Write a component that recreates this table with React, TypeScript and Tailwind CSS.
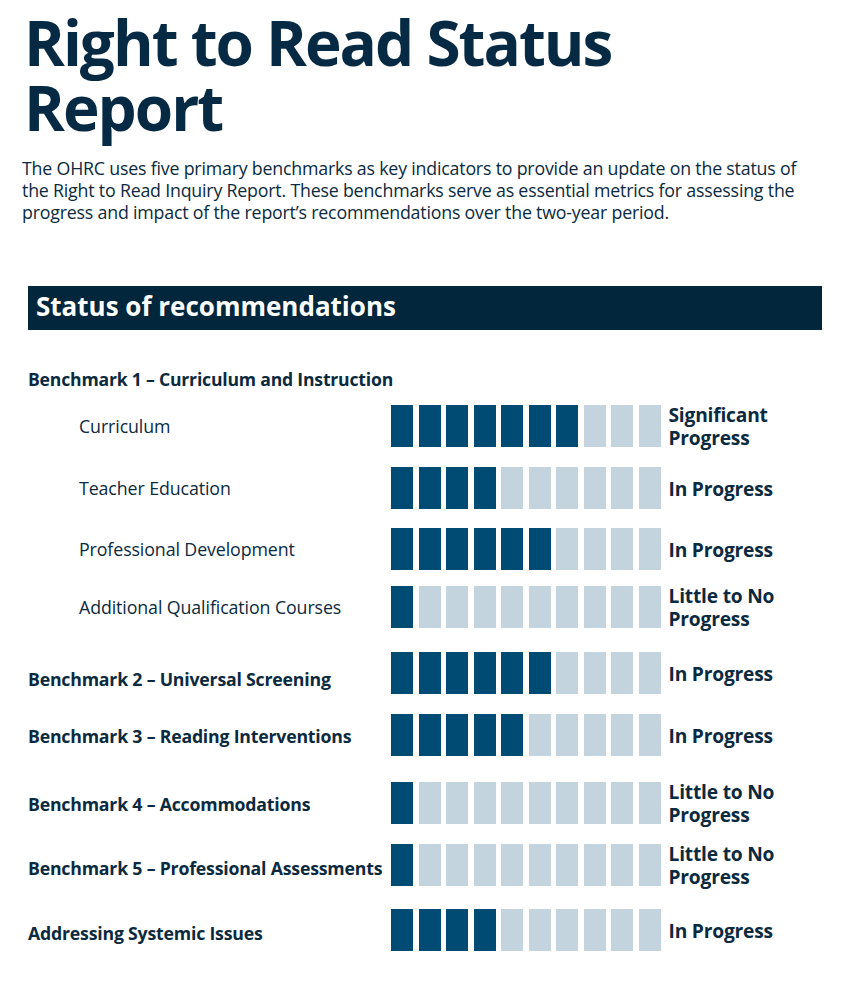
import React from 'react';

type Row = {
  label: string;
  sub?: boolean;
  filled: number;
  status: string[];
  gap: string;
  nudge?: string;
};

// gaps and nudges follow the uneven spacing of the printed report
const ROWS: Row[] = [
  { label: 'Curriculum', sub: true, filled: 7, status: ['Significant', 'Progress'], gap: 'mt-[15px]' },
  { label: 'Teacher Education', sub: true, filled: 4, status: ['In Progress'], gap: 'mt-[20px]' },
  { label: 'Professional Development', sub: true, filled: 6, status: ['In Progress'], gap: 'mt-[19px]' },
  { label: 'Additional Qualification Courses', sub: true, filled: 1, status: ['Little to No', 'Progress'], gap: 'mt-[16px]' },
  { label: 'Benchmark 2 – Universal Screening', filled: 6, status: ['In Progress'], gap: 'mt-[24px]', nudge: 'pt-[12px]' },
  { label: 'Benchmark 3 – Reading Interventions', filled: 5, status: ['In Progress'], gap: 'mt-[20px]', nudge: 'pt-[2px]' },
  { label: 'Benchmark 4 – Accommodations', filled: 1, status: ['Little to No', 'Progress'], gap: 'mt-[26px]', nudge: 'pt-[2px]' },
  { label: 'Benchmark 5 – Professional Assessments', filled: 1, status: ['Little to No', 'Progress'], gap: 'mt-[20px]', nudge: 'pt-[6px]' },
  { label: 'Addressing Systemic Issues', filled: 4, status: ['In Progress'], gap: 'mt-[23px]', nudge: 'pt-[6px]' },
];

function Bars({ filled }: { filled: number }) {
  return (
    <div className="flex gap-[5.5px]">
      {Array.from({ length: 10 }).map((_, i) => (
        <div
          key={i}
          className={i < filled ? 'h-[42px] w-[22px] bg-[#004b73]' : 'h-[42px] w-[22px] bg-[#c3d4df]'}
        />
      ))}
    </div>
  );
}

export default function App() {
  return (
    <div
      className="min-h-[999px] w-[841px] bg-white pb-10 text-[#0b2a40]"
      style={{ fontFamily: '"Open Sans", "Noto Sans", sans-serif' }}
    >
      <div className="pl-[24px] pr-2 pt-[10px]">
        <h1 className="text-[62px] font-bold leading-[65px] tracking-[-2px] text-[#062a44]">
          Right to Read Status
          <br />
          Report
        </h1>
      </div>
      <p className="mt-[17px] whitespace-nowrap pl-[22px] text-[17.8px] leading-[22px] tracking-[-0.2px]">
        The OHRC uses five primary benchmarks as key indicators to provide an update on the status of
        <br />
        the Right to Read Inquiry Report. These benchmarks serve as essential metrics for assessing the
        <br />
        progress and impact of the report’s recommendations over the two-year period.
      </p>

      <div className="ml-[28px] mt-[63px] flex h-[44px] w-[794px] items-center bg-[#02263b] pb-[5px] pl-[8px]">
        <h2 className="text-[26px] font-bold leading-[34px] text-white">Status of recommendations</h2>
      </div>

      <div className="pl-[28px]">
        <div className="mt-[38px] text-[17.6px] font-bold leading-[22px] tracking-[-0.2px]">
          Benchmark 1 – Curriculum and Instruction
        </div>

        {ROWS.map((row) => (
          <div key={row.label} className={`flex h-[42px] items-center ${row.gap}`}>
            <div
              className={
                row.sub
                  ? 'w-[363px] pl-[51px] text-[17.8px] leading-[22px] tracking-[-0.1px]'
                  : `w-[363px] text-[17.7px] font-bold leading-[22px] tracking-[-0.2px] ${row.nudge ?? ''}`
              }
            >
              {row.label}
            </div>
            <Bars filled={row.filled} />
            <div className="ml-[8px] text-[19.2px] font-bold leading-[23px] tracking-[-0.2px]">
              {row.status.map((s) => (
                <div key={s}>{s}</div>
              ))}
            </div>
          </div>
        ))}
      </div>
    </div>
  );
}
